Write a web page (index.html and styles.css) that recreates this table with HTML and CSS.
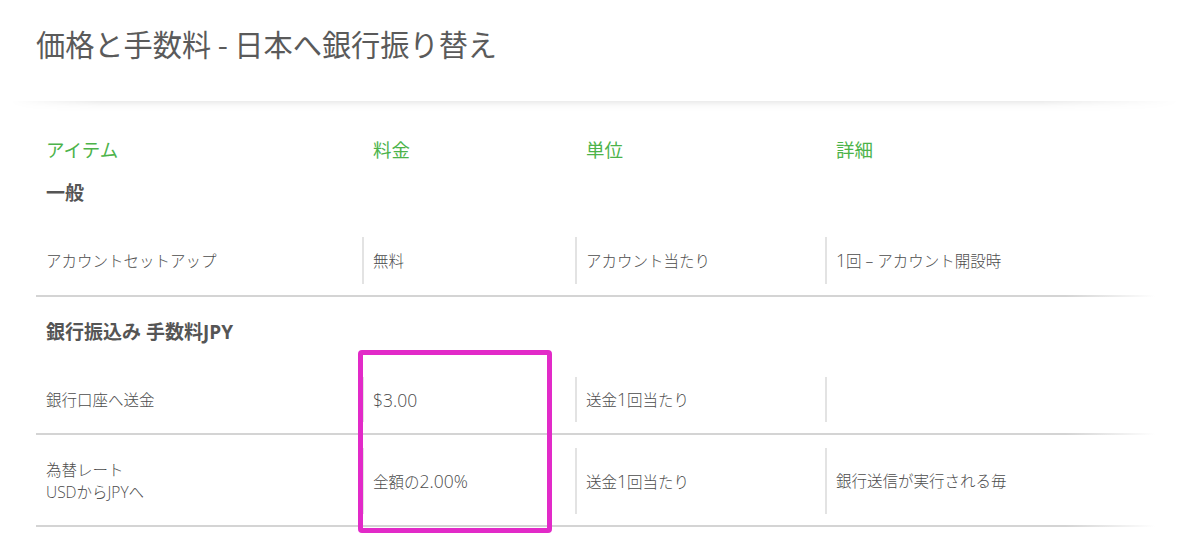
FILE: index.html
```html
<!DOCTYPE html>
<html lang="ja">
<head>
<meta charset="utf-8">
<title>価格と手数料 - 日本へ銀行振り替え</title>
<link rel="stylesheet" href="styles.css">
</head>
<body>
<div class="page">
  <h1 class="title">価格と手数料 - 日本へ銀行振り替え</h1>
  <div class="shadow"></div>
  <div class="table">
    <div class="row head">
      <div class="cell">アイテム</div>
      <div class="cell">料金</div>
      <div class="cell">単位</div>
      <div class="cell">詳細</div>
    </div>
    <div class="section">一般</div>
    <div class="row item item-first">
      <div class="cell">アカウントセットアップ</div>
      <div class="cell">無料</div>
      <div class="cell">アカウント当たり</div>
      <div class="cell"><span><span class="lat">1</span>回 – アカウント開設時</span></div>
    </div>
    <div class="section section2">銀行振込み 手数料JPY</div>
    <div class="row item item-second">
      <div class="cell">銀行口座へ送金</div>
      <div class="cell"><span class="lat">$3.00</span></div>
      <div class="cell"><span>送金<span class="lat">1</span>回当たり</span></div>
      <div class="cell"></div>
    </div>
    <div class="row item item-third">
      <div class="cell"><span>為替レート</span><span>USDからJPYへ</span></div>
      <div class="cell"><span>全額の<span class="lat">2.00%</span></span></div>
      <div class="cell"><span>送金<span class="lat">1</span>回当たり</span></div>
      <div class="cell">銀行送信が実行される毎</div>
    </div>
  </div>
  <div class="highlight"></div>
</div>
</body>
</html>
```

FILE: styles.css
```css
html, body {
  margin: 0;
  padding: 0;
  background: #ffffff;
}

body {
  font-family: "Open Sans", "Noto Sans CJK JP", sans-serif;
  color: #5c5c5c;
}

.page {
  position: relative;
  width: 1200px;
  height: 559px;
  overflow: hidden;
}

.title {
  margin: 25px 0 0 36px;
  font-size: 29.2px;
  line-height: 36px;
  font-weight: 400;
  color: #5a5a5a;
  font-family: "Noto Sans CJK JP", sans-serif;
}

.shadow {
  margin: 40px 20px 0 10px;
  height: 10px;
  background: linear-gradient(to bottom, rgba(0, 0, 0, 0.075), rgba(0, 0, 0, 0.02) 50%, rgba(0, 0, 0, 0));
  -webkit-mask-image: linear-gradient(to right, transparent 0, #000 8%, #000 88%, transparent 100%);
  mask-image: linear-gradient(to right, transparent 0, #000 8%, #000 88%, transparent 100%);
}

.table {
  margin-left: 36px;
  width: 1119px;
}

.row {
  display: grid;
  grid-template-columns: 326px 213px 250px 330px;
}

.cell {
  padding-left: 9px;
  font-size: 15.5px;
  line-height: 22px;
  font-weight: 300;
  color: #4c4c4c;
}

.lat {
  font-family: "Open Sans", sans-serif;
  font-weight: 300;
}

.item .cell .lat {
  font-size: 17.5px;
}

.row .cell:first-child {
  padding-left: 10px;
}

.head {
  margin-top: 27px;
}

.head .cell {
  font-size: 18.5px;
  line-height: 24px;
  font-weight: 400;
  color: #4cb34a;
  padding-left: 11px;
}

.head .cell:first-child {
  padding-left: 10px;
}

.section {
  margin-top: 19px;
  padding-left: 10px;
  font-size: 19px;
  line-height: 24px;
  font-weight: 700;
  color: #555555;
}

.section2 {
  margin-top: 23px;
}

.item {
  padding: 12px 0;
  margin-top: 21px;
  background: linear-gradient(to right, #d4d4d4 0, #d4d4d4 92%, rgba(212, 212, 212, 0) 100%) left bottom / 100% 2px no-repeat;
}

.item-first {
  margin-top: 20px;
  padding-bottom: 13px;
}

.item-second {
  padding-bottom: 13px;
}

.item-third {
  padding: 13px 0;
}

.item + .item {
  margin-top: 0;
}

.item .cell {
  display: flex;
  flex-direction: column;
  justify-content: center;
  padding-top: 11px;
  padding-bottom: 11px;
}

.item-first .cell {
  padding-top: 12px;
  padding-bottom: 12px;
}

.item .cell + .cell {
  border-left: 2px solid #e3e3e3;
}

.highlight {
  position: absolute;
  left: 358px;
  top: 350px;
  width: 194px;
  height: 183px;
  box-sizing: border-box;
  border: 5px solid #e22ac8;
  border-radius: 4px;
}
```
